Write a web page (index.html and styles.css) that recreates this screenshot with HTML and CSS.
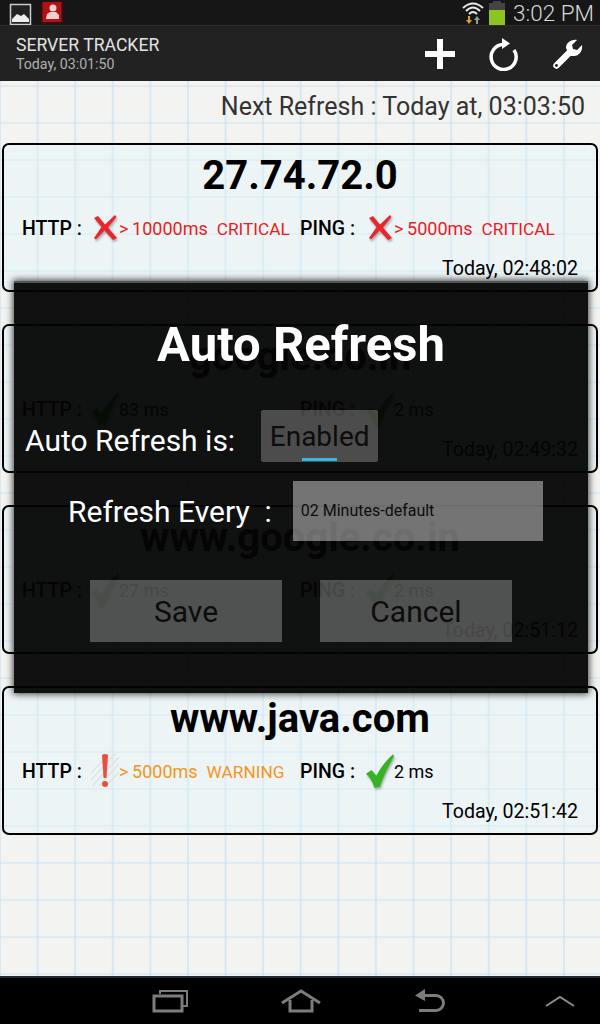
FILE: index.html
```html
<!DOCTYPE html>
<html lang="en">
  <head>
    <meta charset="UTF-8" />
    <title>Server Tracker</title>
    <link rel="stylesheet" href="styles.css">
  </head>
  <body>
    <svg class="defs" width="0" height="0">
      <symbol id="cross" viewBox="0 0 28 28">
        <path d="M3 4 L7 2 L14 10.5 L24 1 L25.5 3 L17 13.5 L26 24 L22 26 L13.5 16.5 L5 25.5 L3 24 L10.5 13 Z" fill="#e8262c" />
      </symbol>
      <symbol id="check" viewBox="0 0 30 36">
        <path d="M0 21 L6 17 L11 23 C16 14 21 7 29 0 L30 2 C25 12 19 22 15 35 L9 36 C7 29 4 25 0 21 Z" fill="#35b423" />
      </symbol>
      <symbol id="warn" viewBox="0 0 28 36">
        <path d="M0 20 L18 1 M0 27 L24 1 M2 32 L28 4 M8 33 L28 11 M14 34 L28 19" stroke="#dde3e6" stroke-width="1.5" fill="none" />
        <path d="M11 2 Q14 0 17 2 L15.5 25 L12.5 25 Z" fill="#e8503c" />
        <circle cx="14" cy="31" r="3" fill="#e8503c" />
      </symbol>
    </svg>

    <div class="screen">
      <div class="statusbar">
        <svg class="note-icon" width="24" height="24" viewBox="0 0 24 24">
          <rect x="1.5" y="3.5" width="20" height="20" fill="#222" stroke="#ccc" stroke-width="1.5" />
          <path d="M3 21 L3 18 L8 13 L12 15 L15 13 L20 18 L20 21 Z" fill="#eee" />
        </svg>
        <svg class="note-icon" width="24" height="24" viewBox="0 0 24 24">
          <rect x="0.5" y="0" width="23" height="23" rx="2" fill="#3a0a0c" />
          <rect x="2.5" y="1" width="19" height="20" rx="1" fill="#b01217" />
          <circle cx="13" cy="7" r="3.5" fill="#f0d0d0" />
          <path d="M6 18 L7 13 L10 11 L16 11 L19 14 L19 18 Z" fill="#f0d0d0" />
        </svg>
        <div class="status-right">
          <svg width="22" height="24" viewBox="0 0 22 24">
            <path d="M1 7 Q11 -2 21 7 M4 10 Q11 3 18 10 M7 13 Q11 9 15 13" stroke="#e8e8e8" stroke-width="2" fill="none" />
            <path d="M6 15 L8 15 L8 19 L10 19 L7 23 L4 19 L6 19 Z" fill="#e0a030" />
            <path d="M14 23 L16 23 L16 19 L18 19 L15 15 L12 19 L14 19 Z" fill="#999" />
          </svg>
          <svg class="battery" width="16" height="24" viewBox="0 0 16 24">
            <rect x="4" y="0" width="8" height="3" fill="#444" />
            <rect x="0" y="2" width="16" height="9" fill="#444" />
            <rect x="0" y="9" width="16" height="15" fill="#8fc31f" />
          </svg>
          <span class="clock">3:02 PM</span>
        </div>
      </div>

      <header class="actionbar">
        <div class="app-title">
          <div class="app-name">SERVER TRACKER</div>
          <div class="app-sub">Today, 03:01:50</div>
        </div>
        <div class="actions">
          <svg width="30" height="30" viewBox="0 0 30 30">
            <path d="M12 0 H18 V12 H30 V18 H18 V30 H12 V18 H0 V12 H12 Z" fill="#fff" />
          </svg>
          <svg width="30" height="34" viewBox="1 0 30 34">
            <path d="M15 7.5 A12.5 12.5 0 1 0 26 13" stroke="#fff" stroke-width="3.5" fill="none" />
            <path d="M14 1 L22 6.5 L14 12 Z" fill="#fff" />
          </svg>
          <svg width="30" height="30" viewBox="0 0 30 30">
            <path d="M3.5 26.5 L17 13" stroke="#fff" stroke-width="6.5" stroke-linecap="round" />
            <path d="M13 9 C13 4 18 0 24 1 L19 6 L20 10 L24 11 L29 6 C30 12 26 17 21 17 L17 17 Z" fill="#fff" />
            <circle cx="3.5" cy="26.5" r="1.4" fill="#222" />
          </svg>
        </div>
      </header>

      <main class="content">
        <div class="next-refresh">Next Refresh : Today at, 03:03:50</div>

        <div class="server-list">
          <div class="card">
            <div class="host">27.74.72.0</div>
            <div class="checks">
              <div class="check check-http">
                <span class="label">HTTP :</span>
                <svg class="icon" width="28" height="28"><use href="#cross" /></svg>
                <span class="value critical">&gt;&#8201;10000ms&nbsp; <span class="status">CRITICAL</span></span>
              </div>
              <div class="check">
                <span class="label">PING :</span>
                <svg class="icon" width="28" height="28"><use href="#cross" /></svg>
                <span class="value critical">&gt;&#8201;5000ms&nbsp; <span class="status">CRITICAL</span></span>
              </div>
            </div>
            <div class="checked-at">Today, 02:48:02</div>
          </div>

          <div class="card">
            <div class="host">google.co.in</div>
            <div class="checks">
              <div class="check check-http">
                <span class="label">HTTP :</span>
                <svg class="icon" width="28" height="34"><use href="#check" /></svg>
                <span class="value">83 ms</span>
              </div>
              <div class="check">
                <span class="label">PING :</span>
                <svg class="icon" width="28" height="34"><use href="#check" /></svg>
                <span class="value">2 ms</span>
              </div>
            </div>
            <div class="checked-at">Today, 02:49:32</div>
          </div>

          <div class="card">
            <div class="host">www.google.co.in</div>
            <div class="checks">
              <div class="check check-http">
                <span class="label">HTTP :</span>
                <svg class="icon" width="28" height="34"><use href="#check" /></svg>
                <span class="value">27 ms</span>
              </div>
              <div class="check">
                <span class="label">PING :</span>
                <svg class="icon" width="28" height="34"><use href="#check" /></svg>
                <span class="value">2 ms</span>
              </div>
            </div>
            <div class="checked-at">Today, 02:51:12</div>
          </div>

          <div class="card">
            <div class="host">www.java.com</div>
            <div class="checks">
              <div class="check check-http">
                <span class="label">HTTP :</span>
                <svg class="icon flat" width="28" height="36"><use href="#warn" /></svg>
                <span class="value warning">&gt;&#8201;5000ms&nbsp; <span class="status">WARNING</span></span>
              </div>
              <div class="check">
                <span class="label">PING :</span>
                <svg class="icon" width="28" height="34"><use href="#check" /></svg>
                <span class="value">2 ms</span>
              </div>
            </div>
            <div class="checked-at">Today, 02:51:42</div>
          </div>
        </div>
      </main>

      <nav class="navbar">
        <svg width="36" height="24" viewBox="0 0 36 24">
          <path d="M8 5 V2 H35 V17 H31" stroke="#7c7c7c" stroke-width="2" fill="none" />
          <rect x="2" y="7" width="28" height="15" stroke="#7c7c7c" stroke-width="3" fill="none" />
        </svg>
        <svg width="40" height="24" viewBox="0 0 40 24">
          <path d="M1 14 L20 2 L39 14" stroke="#7c7c7c" stroke-width="3" fill="none" />
          <path d="M9 11 V22 H31 V11" stroke="#7c7c7c" stroke-width="3" fill="none" />
        </svg>
        <svg width="32" height="24" viewBox="0 0 32 24">
          <path d="M11 0 L1 6.5 L11 12 Z" fill="#7c7c7c" />
          <path d="M9 6.5 H22 A7.5 7.5 0 0 1 22 21.5 H5" stroke="#7c7c7c" stroke-width="3" fill="none" />
        </svg>
        <svg class="nav-up" width="30" height="12" viewBox="0 0 30 12">
          <path d="M1 11 L15 2 L29 11" stroke="#8c8c8c" stroke-width="2" fill="none" />
        </svg>
      </nav>

      <div class="dialog">
        <h1 class="dialog-title">Auto Refresh</h1>
        <div class="auto-row">
          <span class="dialog-label auto-label">Auto Refresh is:</span>
          <div class="toggle">Enabled<span class="toggle-bar"></span></div>
        </div>
        <div class="every-row">
          <span class="dialog-label">Refresh Every&nbsp; :</span>
          <div class="select">02 Minutes-default</div>
        </div>
        <div class="dialog-buttons">
          <button class="btn">Save</button>
          <button class="btn">Cancel</button>
        </div>
      </div>
    </div>
  </body>
</html>
```

FILE: styles.css
```css
* {
  margin: 0;
  padding: 0;
  box-sizing: border-box;
}

body {
  font-family: Roboto, "Liberation Sans", sans-serif;
  background-color: #000;
}

.defs {
  position: absolute;
}

.screen {
  position: relative;
  width: 600px;
  height: 1024px;
  display: flex;
  flex-direction: column;
  overflow: hidden;
}

.statusbar {
  height: 26px;
  display: flex;
  align-items: center;
  padding: 0 6px 0 9px;
  gap: 7px;
  background-color: #161616;
  border-bottom: 1px solid #2e2e2e;
}

.note-icon {
  flex: none;
}

.status-right {
  margin-left: auto;
  display: flex;
  align-items: center;
}

.battery {
  margin-left: 5px;
}

.clock {
  margin-left: 8px;
  font-size: 22.5px;
  font-weight: 300;
  color: #d8d8d8;
}

.actionbar {
  height: 55px;
  display: flex;
  align-items: center;
  padding: 0 17px 0 16px;
  background-color: #222;
}

.app-name {
  font-size: 17.6px;
  line-height: 21px;
  color: #e4e4e4;
}

.app-sub {
  font-size: 14.2px;
  line-height: 17px;
  color: #b0b0b0;
}

.actions {
  margin-left: auto;
  display: flex;
  align-items: center;
  gap: 34px;
}

.content {
  flex: 1;
  background-color: #f3f3f2;
  background-image:
    linear-gradient(90deg, rgba(190, 220, 240, 0.5) 2px, transparent 2px),
    linear-gradient(0deg, rgba(195, 222, 240, 0.4) 2px, transparent 2px);
  background-size: 37.6px 100%, 100% 37px;
  background-position: -1px 0, 0 6px;
}

.next-refresh {
  height: 62px;
  padding: 11px 15px 0 0;
  text-align: right;
  font-size: 25px;
  line-height: 30px;
  color: #333;
}

.server-list {
  display: flex;
  flex-direction: column;
  gap: 32px;
  padding: 0 2px;
}

.card {
  height: 149px;
  border: 2px solid #000;
  border-radius: 7px;
  background-color: rgba(224, 244, 250, 0.4);
  color: #000;
}

.host {
  height: 61px;
  text-align: center;
  font-size: 40px;
  font-weight: 700;
  line-height: 61px;
}

.checks {
  height: 44px;
  display: flex;
  align-items: center;
  padding-left: 18px;
}

.check {
  display: flex;
  align-items: center;
}

.check-http {
  width: 278px;
}

.label {
  width: 69px;
  font-size: 19.5px;
  font-weight: 500;
}

.check:last-child .label {
  width: 66px;
}

.icon {
  flex: none;
  filter: drop-shadow(1px 2px 1px rgba(0, 0, 0, 0.3)) blur(0.4px);
}

.icon.flat {
  filter: none;
}

.value {
  font-size: 18px;
  white-space: nowrap;
}

.status {
  font-size: 17.3px;
}

.critical {
  color: #ea1c24;
}

.warning {
  color: #f4951d;
}

.checked-at {
  padding: 7px 18px 0 0;
  text-align: right;
  font-size: 19.6px;
  line-height: 24px;
}

.navbar {
  height: 48px;
  display: flex;
  align-items: center;
  background-color: #000;
  border-top: 2px solid #1b2d3a;
  padding-left: 152px;
  gap: 93px;
}

.nav-up {
  margin-left: 6px;
}

/* dialog sits over the list */
.dialog {
  position: absolute;
  left: 14px;
  top: 281px;
  width: 574px;
  height: 412px;
  background-color: rgba(4, 4, 4, 0.95);
  border-top: 2px solid #555;
  box-shadow: 0 0 7px 1px rgba(0, 0, 0, 0.75);
  color: #fff;
}

.dialog-title {
  height: 112px;
  padding-top: 31px;
  text-align: center;
  font-size: 49px;
  font-weight: 700;
  line-height: 62px;
}

.dialog-label {
  font-size: 30px;
  line-height: 36px;
}

.auto-label {
  padding-top: 10px;
}

.auto-row {
  height: 52px;
  margin-top: 15px;
  display: flex;
  align-items: center;
  padding-left: 11px;
}

.toggle {
  position: relative;
  width: 117px;
  height: 52px;
  margin-left: 26px;
  background-color: rgba(255, 255, 255, 0.25);
  border-radius: 2px;
  color: #0c0c0c;
  text-align: center;
  font-size: 28px;
  line-height: 54px;
}

.toggle-bar {
  position: absolute;
  left: 41px;
  bottom: 1px;
  width: 35px;
  height: 3px;
  background-color: #33b5e5;
}

.every-row {
  height: 60px;
  margin-top: 19px;
  display: flex;
  align-items: center;
  padding-left: 54px;
}

.every-row .dialog-label {
  padding-top: 2px;
}

.select {
  width: 250px;
  height: 60px;
  margin-left: 21px;
  padding-left: 8px;
  background-color: rgba(255, 255, 255, 0.42);
  color: #0c0c0c;
  font-size: 16px;
  line-height: 60px;
}

.dialog-buttons {
  margin-top: 39px;
  display: flex;
  gap: 38px;
  padding-left: 76px;
}

.btn {
  width: 192px;
  height: 62px;
  border: none;
  background-color: rgba(255, 255, 255, 0.27);
  font-family: Roboto, "Liberation Sans", sans-serif;
  font-size: 30px;
  color: #0c0c0c;
}
```
